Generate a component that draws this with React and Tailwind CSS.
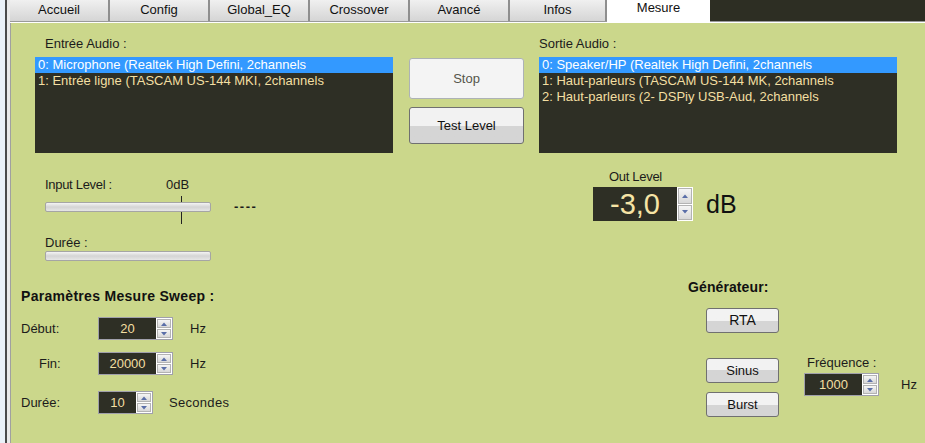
import React from 'react';

const inputs = [
  '0: Microphone (Realtek High Defini, 2channels',
  '1: Entrée ligne (TASCAM US-144 MKI, 2channels',
];

const outputs = [
  '0: Speaker/HP (Realtek High Defini, 2channels',
  '1: Haut-parleurs (TASCAM US-144 MK, 2channels',
  '2: Haut-parleurs (2- DSPiy USB-Aud, 2channels',
];

const tabs = ['Accueil', 'Config', 'Global_EQ', 'Crossover', 'Avancé'];

const Tab = ({ label, className = 'w-[100px]' }) => (
  <div className={`${className} h-[22px] flex flex-col`}>
    <div className="h-[21px] border-r-2 border-[#8e8e8e] bg-linear-to-b from-[#f0f0f0] to-[#d5d5d5] text-center text-[13px] leading-[15px] pt-[2px] text-[#111]">
      {label}
    </div>
    <div className="h-px bg-[#9a9a9a]" />
  </div>
);

const ListBox = ({ items }) => (
  <div className="mt-[6px] h-[96px] bg-[#2e2f25] text-[13px] leading-[16px]">
    {items.map((item, i) => (
      <div
        key={item}
        className={`h-[16px] pl-[3px] whitespace-nowrap ${i === 0 ? 'bg-[#3399ff] text-white' : 'text-[#f3dfa2]'}`}
      >
        {item}
      </div>
    ))}
  </div>
);

const Arrow = ({ up }) => (
  <svg width="6" height="4" viewBox="0 0 6 4">
    <path d={up ? 'M0 4 L3 0.5 L6 4 Z' : 'M0 0 L3 3.5 L6 0 Z'} fill="#5a6ea8" />
  </svg>
);

const SpinBtn = ({ up }) => (
  <div className="flex-1 border border-[#b3b3b3] bg-linear-to-b from-[#f5f5f5] to-[#d8d8d8] flex items-center justify-center">
    <Arrow up={up} />
  </div>
);

// petit NumericUpDown sombre
const Spin = ({ value, w }) => (
  <div className="flex h-[23px] border border-[#a0a0ab]">
    <div className={`${w} bg-[#2e2f25] text-[#f3dfa2] text-[13px] flex items-center justify-center`}>
      {value}
    </div>
    <div className="w-[16px] bg-white flex flex-col p-px gap-px">
      <SpinBtn up />
      <SpinBtn />
    </div>
  </div>
);

const Bar = () => (
  <div className="w-[166px] h-[10px] rounded-[2px] border border-[#a5a5a5] bg-linear-to-b from-[#f4f4f4] via-[#d4d4d4] to-[#e6e6e6]" />
);

const WinButton = ({ children, className = '' }) => (
  <div
    className={`flex items-center justify-center rounded-[3px] border border-[#707070] bg-linear-to-b from-[#f2f2f2] from-50% to-[#d5d5d5] to-50% text-[13px] text-[#111] ${className}`}
  >
    {children}
  </div>
);

export default function App() {
  return (
    <div className="w-[925px] h-[443px] overflow-hidden flex font-['Liberation_Sans',Arial,sans-serif] text-[#1b1b1b]">
      {/* bord de fenêtre */}
      <div className="flex h-full">
        <div className="w-[5px] bg-[#eaf1f8]" />
        <div className="w-[2px] bg-[#4a4a4a]" />
        <div className="w-[3px] bg-[#e9e9e9]" />
      </div>

      <div className="flex-1 flex flex-col">
        {/* onglets */}
        <div className="flex h-[23px]">
          {tabs.map((t) => (
            <Tab key={t} label={t} />
          ))}
          <Tab label="Infos" className="w-[97px]" />
          <div className="w-[103px] h-[23px] bg-white text-center text-[13px] leading-[15px] text-[#111]">
            Mesure
          </div>
          <div className="flex-1 flex flex-col">
            <div className="h-[21px] bg-[#2d2e23]" />
            <div className="h-px bg-[#9a9a9a]" />
            <div className="h-px bg-white" />
          </div>
        </div>

        {/* panneau */}
        <div className="flex-1 bg-[#cbd78b] border-l border-[#a0a0a0] flex flex-col text-[13px] leading-[15px]">
          {/* périphériques */}
          <div className="h-[130px] flex pl-[24px] pt-[13px]">
            <div className="w-[358px] flex flex-col">
              <div className="pl-[10px]">Entrée Audio :</div>
              <ListBox items={inputs} />
            </div>
            <div className="ml-[16px] w-[115px] flex flex-col pt-[22px]">
              <div className="h-[41px] rounded-[3px] border border-[#adb2b5] bg-[#f4f4f4] flex items-center justify-center text-[#55554b]">
                Stop
              </div>
              <WinButton className="mt-[8px] h-[37px]">Test Level</WinButton>
            </div>
            <div className="ml-[15px] w-[358px] flex flex-col">
              <div>Sortie Audio :</div>
              <ListBox items={outputs} />
            </div>
          </div>

          {/* niveaux */}
          <div className="h-[117px] flex">
            <div className="ml-[34px] w-[220px] flex flex-col pt-[24px]">
              <div className="flex">
                <span className="w-[121px] tracking-[-0.3px]">Input Level :</span>
                <span>0dB</span>
              </div>
              <div className="flex items-center mt-[7px]">
                <div className="relative">
                  <div className="absolute left-[136px] top-[-6px] w-px h-[28px] bg-[#222]" />
                  <div className="relative">
                    <Bar />
                  </div>
                </div>
                <span className="ml-[23px] font-bold tracking-[1.5px]">----</span>
              </div>
              <div className="mt-[21px]">Durée :</div>
              <div className="mt-px">
                <Bar />
              </div>
            </div>
            <div className="ml-[328px] flex flex-col pt-[16px]">
              <div className="pl-[16px] tracking-[-0.3px]">Out Level</div>
              <div className="flex items-center mt-[3px]">
                <div className="w-[84px] h-[34px] bg-[#2e2f25] text-[#f6e4a6] text-[29px] leading-[34px] text-center">
                  -3,0
                </div>
                <div className="w-[16px] h-[34px] border border-white flex flex-col gap-px bg-white">
                  <SpinBtn up />
                  <SpinBtn />
                </div>
                <span className="ml-[13px] text-[25px] leading-[28px] text-[#111]">dB</span>
              </div>
            </div>
          </div>

          {/* sweep + générateur */}
          <div className="flex-1 flex items-start">
            <div className="ml-[10px] w-[260px] flex flex-col pt-[18px]">
              <div className="font-bold text-[14px] leading-[16px] tracking-[0.3px] text-[#111]">
                Paramètres Mesure Sweep :
              </div>
              <div className="flex items-center mt-[13px]">
                <span className="w-[77px]">Début:</span>
                <Spin value="20" w="w-[57px]" />
                <span className="ml-[17px]">Hz</span>
              </div>
              <div className="flex items-center mt-[12px]">
                <span className="w-[77px] pl-[18px]">Fin:</span>
                <Spin value="20000" w="w-[57px]" />
                <span className="ml-[17px]">Hz</span>
              </div>
              <div className="flex items-center mt-[16px]">
                <span className="w-[77px]">Durée:</span>
                <Spin value="10" w="w-[37px]" />
                <span className="ml-[16px] tracking-[0.3px]">Secondes</span>
              </div>
            </div>

            <div className="ml-[407px] flex flex-col pt-[9px]">
              <div className="font-bold text-[14px] leading-[16px] tracking-[0.1px] text-[#111]">Générateur:</div>
              <div className="flex mt-[13px]">
                <div className="ml-[18px] w-[73px] flex flex-col">
                  <WinButton className="h-[25px] text-[14px]">RTA</WinButton>
                  <WinButton className="h-[25px] mt-[25px]">Sinus</WinButton>
                  <WinButton className="h-[25px] mt-[9px]">Burst</WinButton>
                </div>
                <div className="ml-[25px] flex flex-col pt-[47px]">
                  <div className="pl-[3px]">Fréquence :</div>
                  <div className="flex items-center mt-[3px]">
                    <Spin value="1000" w="w-[57px]" />
                    <span className="ml-[22px]">Hz</span>
                  </div>
                </div>
              </div>
            </div>
          </div>
        </div>
      </div>
    </div>
  );
}
